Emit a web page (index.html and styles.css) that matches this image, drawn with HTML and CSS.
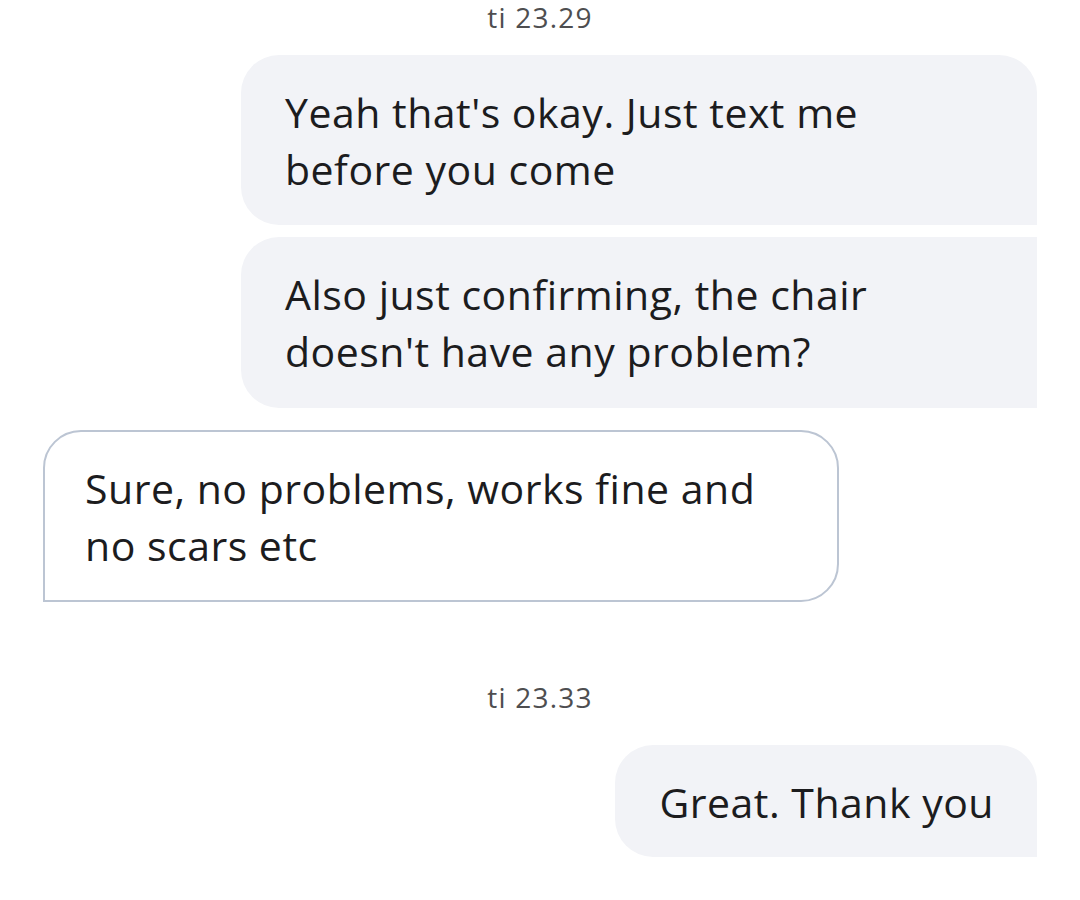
FILE: index.html
```html
<!DOCTYPE html>
<html>
<head>
<meta charset="utf-8">
<link rel="stylesheet" href="styles.css">
</head>
<body>
<div class="chat">
  <div class="stamp stamp-first">ti 23.29</div>
  <div class="msg out first">Yeah that's okay. Just text me before you come</div>
  <div class="msg out middle">Also just confirming, the chair doesn't have any problem?</div>
  <div class="msg in">Sure, no problems, works fine and no scars etc</div>
  <div class="stamp stamp-second">ti 23.33</div>
  <div class="msg out single">Great. Thank you</div>
</div>
</body>
</html>
```

FILE: styles.css
```css
html, body {
  margin: 0;
  padding: 0;
  background: #ffffff;
}
.chat {
  display: flex;
  flex-direction: column;
  padding: 0 43px;
  font-family: "Open Sans", "Noto Sans", sans-serif;
  color: #1c1c1e;
}
.stamp {
  align-self: center;
  font-size: 28px;
  line-height: 34px;
  letter-spacing: 1.2px;
  color: #4e4e50;
}
.stamp-first {
  margin-bottom: 21px;
}
.stamp-second {
  margin-top: 78px;
  margin-bottom: 31px;
}
.msg {
  box-sizing: border-box;
  max-width: 796px;
  font-size: 41px;
  line-height: 57px;
  letter-spacing: 0.5px;
  padding: 29px 43px 27px 44px;
}
.out {
  align-self: flex-end;
  background: #f2f3f7;
}
.first {
  border-radius: 38px 38px 0 38px;
}
.middle {
  margin-top: 12px;
  padding-bottom: 28px;
  border-radius: 38px 0 0 38px;
}
.single {
  padding-bottom: 26px;
  border-radius: 38px 38px 0 38px;
}
.in {
  align-self: flex-start;
  margin-top: 22px;
  background: #ffffff;
  border: 2px solid #bcc5d3;
  padding: 28px 41px 26px 40px;
  border-radius: 38px 38px 38px 0;
}
```
